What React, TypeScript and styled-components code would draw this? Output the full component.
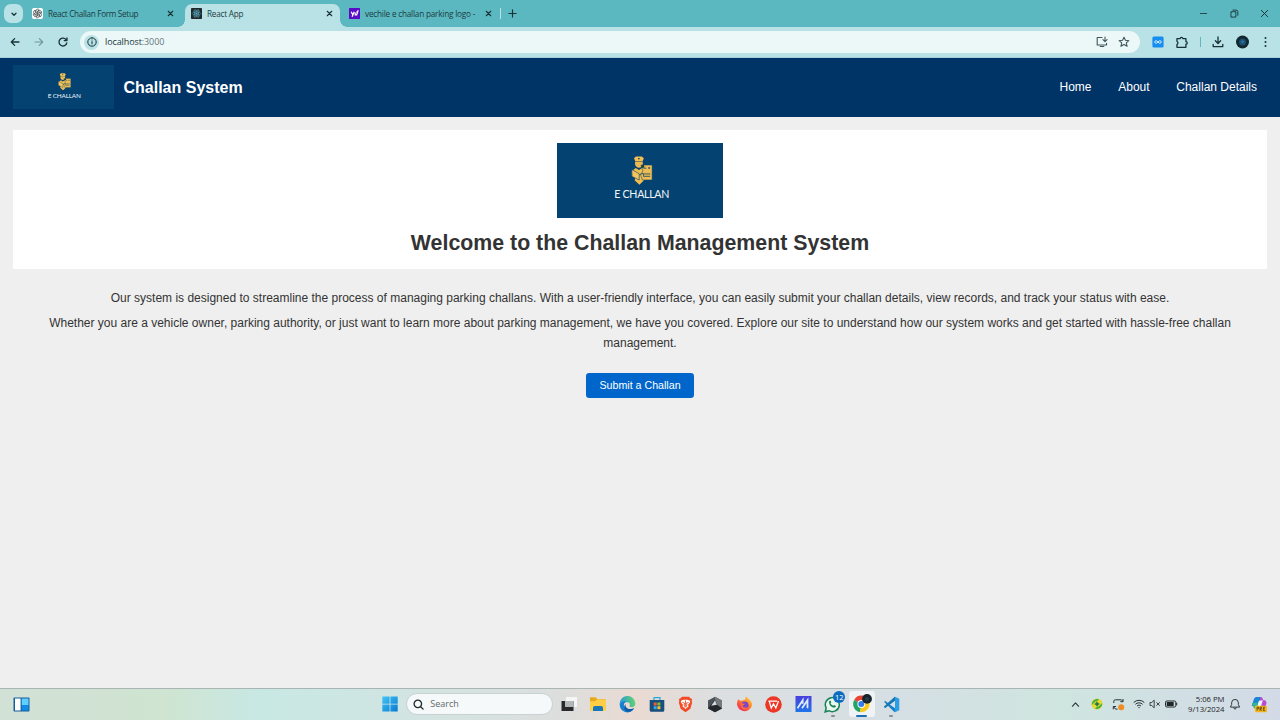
import React from "react";
import styled, { createGlobalStyle } from "styled-components";

const GlobalStyle = createGlobalStyle`
  *, *::before, *::after { box-sizing: border-box; }
  body { margin: 0; background: #efefef; overflow: hidden; }
  h1, h2, p { margin: 0; }
  svg { display: block; flex: none; }
`;

const ui = `"Open Sans", "Noto Sans", sans-serif`;
const sans = `"Liberation Sans", Arial, sans-serif`;

const Screen = styled.div`
  width: 1280px;
  height: 720px;
  display: flex;
  flex-direction: column;
  overflow: hidden;
  font-family: ${sans};
  color: #333;
`;

/* Browser chrome */
const TabStrip = styled.div`
  height: 27px;
  background: #5bb8c0;
  display: flex;
  align-items: stretch;
  padding-left: 4px;
  flex: none;
`;
const TabMenu = styled.div`
  width: 19px;
  height: 19px;
  margin-top: 4px;
  border-radius: 7px;
  background: #b8e2e5;
  display: grid;
  place-items: center;
`;
const Tab = styled.div<{ $active?: boolean; $width: number; $end?: number }>`
  position: relative;
  width: ${(p) => p.$width}px;
  height: ${(p) => (p.$active ? 23 : 27)}px;
  margin-top: ${(p) => (p.$active ? 4 : 0)}px;
  padding: ${(p) => (p.$active ? "0 7px 4px 6px" : `0 ${p.$end ?? 11}px 0 9px`)};
  border-radius: 7px 7px 0 0;
  background: ${(p) => (p.$active ? "#b8e2e5" : "transparent")};
  display: flex;
  align-items: center;
  ${(p) =>
    p.$active &&
    `
    &::before, &::after {
      content: "";
      position: absolute;
      bottom: 0;
      width: 7px;
      height: 7px;
    }
    &::before { left: -7px; background: radial-gradient(circle at 0 0, transparent 6.5px, #b8e2e5 7px); }
    &::after { right: -7px; background: radial-gradient(circle at 100% 0, transparent 6.5px, #b8e2e5 7px); }
  `}
`;
const TabTitle = styled.span<{ $spacing?: number }>`
  flex: 1;
  margin-left: 5px;
  font: 400 8.2px/12px ${ui};
  letter-spacing: ${(p) => p.$spacing ?? 0}px;
  color: #1d3c40;
  white-space: nowrap;
`;
const TabDivider = styled.i`
  width: 1px;
  height: 11px;
  margin: 8px 7px 0 2px;
  background: #b8e2e5;
`;
const NewTab = styled.div`
  margin-top: 9px;
`;
const WindowButtons = styled.div`
  margin-left: auto;
  width: 81px;
  padding: 9px 11px 0 0;
  display: flex;
  justify-content: space-between;
`;
const AddressRow = styled.div`
  height: 31px;
  flex: none;
  background: #b8e2e5;
  box-shadow: inset 0 -1px #a6d0d5;
  display: flex;
  align-items: center;
  padding: 0 9px 1px 9px;
`;
const NavButtons = styled.div`
  display: flex;
  gap: 12px;
  width: 71px;
`;
const Omnibox = styled.div`
  width: 1060px;
  height: 22px;
  border-radius: 11px;
  background: #ecf7f8;
  display: flex;
  align-items: center;
  padding: 0 10px 0 4px;
`;
const SiteInfo = styled.div`
  width: 15px;
  height: 15px;
  border-radius: 50%;
  background: #b8e2e5;
  display: grid;
  place-items: center;
`;
const Url = styled.span`
  flex: 1;
  margin-left: 6px;
  font: 400 9px/14px ${ui};
  letter-spacing: -0.1px;
  color: #22383b;
  span { color: #66797c; }
`;
const OmniActions = styled.div`
  display: flex;
  gap: 10px;
`;
const Extensions = styled.div`
  flex: 1;
  margin: 0 1px 0 11.5px;
  display: flex;
  align-items: center;
  justify-content: space-between;
`;
const ToolDivider = styled.i`
  width: 1px;
  height: 10px;
  background: #5bb8c0;
`;

/* Web page */
const Page = styled.div`
  flex: 1;
  background: #efefef;
`;
const Header = styled.header`
  height: 59px;
  background: #003366;
  display: flex;
  align-items: center;
  padding: 0 23px 1px 13px;
  color: #fff;
`;
const Brand = styled.h1`
  margin: 1px 0 0 10px;
  font-size: 16px;
  line-height: 20px;
  font-weight: 700;
`;
const Menu = styled.nav`
  margin-left: auto;
  display: flex;
  gap: 26.7px;
  font-size: 12px;
  line-height: 16px;
`;
const MenuLink = styled.a`
  color: #fff;
`;
const LogoBox = styled.div<{ $w: number; $h: number }>`
  width: ${(p) => p.$w}px;
  height: ${(p) => p.$h}px;
  background: #044271;
  display: flex;
  flex-direction: column;
  align-items: center;
  padding-top: ${(p) => p.$w * 0.078}px;
  padding-left: ${(p) => p.$w * 0.02}px;
`;
const LogoText = styled.span<{ $size: number }>`
  margin-top: ${(p) => p.$size * 0.26}px;
  font: 400 ${(p) => p.$size}px/1.2 Lato, ${sans};
  letter-spacing: -0.03em;
  color: #f3f7fa;
  white-space: nowrap;
`;
const Hero = styled.section`
  margin: 13px 13px 0;
  height: 139px;
  background: #fff;
  display: flex;
  flex-direction: column;
  align-items: center;
  padding-top: 13.4px;
`;
const HeroTitle = styled.h2`
  margin-top: 12px;
  font-size: 21.333px;
  line-height: 26px;
  font-weight: 700;
`;
const Copy = styled.main`
  padding: 20px 27px 0;
  display: flex;
  flex-direction: column;
  align-items: center;
  text-align: center;
`;
const Paragraph = styled.p`
  margin-bottom: 6.2px;
  font-size: 12px;
  line-height: 19.2px;
`;
const SubmitButton = styled.button`
  margin-top: 13.9px;
  width: 108px;
  height: 25px;
  border: 0;
  border-radius: 3.3px;
  padding: 0;
  background: #0066cc;
  color: #fff;
  font: 400 10.667px/25px ${sans};
`;

/* Taskbar */
const Taskbar = styled.footer`
  height: 32px;
  flex: none;
  border-top: 1px solid #a8b5b3;
  background: linear-gradient(90deg, #d2e1d6 0, #cfe4d1 165px, #c8e8e4 260px, #cde6e3 350px, #d7e2e0 480px, #dcdedd 560px, #eadad2 635px, #dcdfe1 720px, #d5dfe4 900px, #cfe5df 1060px, #d0e2e2 1120px, #d3dae7 1280px);
  display: flex;
  align-items: center;
  padding-bottom: 1px;
`;
const Widgets = styled.div`
  width: 375.5px;
  padding-left: 13px;
`;
const Apps = styled.div`
  display: flex;
  align-items: center;
`;
const AppSlot = styled.div<{ $active?: boolean; $running?: boolean }>`
  position: relative;
  width: 29.35px;
  height: 26px;
  display: grid;
  place-items: center;
  &::before {
    content: "";
    position: absolute;
    inset: 0 2px;
    border-radius: 3px;
    background: ${(p) => (p.$active ? "#eff3f5" : "transparent")};
  }
  &::after {
    content: "";
    position: absolute;
    bottom: 0;
    width: ${(p) => (p.$active ? 11 : 4)}px;
    height: 2px;
    border-radius: 1px;
    background: ${(p) => (p.$active ? "#1b6fb5" : p.$running ? "#868c90" : "transparent")};
  }
  svg { position: relative; }
`;
const Badge = styled.span`
  position: absolute;
  top: 0;
  right: 2px;
  width: 12px;
  height: 12px;
  border-radius: 50%;
  background: #0b6cbf;
  color: #fff;
  font: 400 7.5px/12px ${ui};
  text-align: center;
`;
const Search = styled.div`
  width: 147px;
  height: 22px;
  margin: 0 1px 0 1px;
  border: 1px solid #c8d2d3;
  border-radius: 11px;
  background: #f5f9f9;
  display: flex;
  align-items: center;
  padding-left: 6px;
  gap: 6.5px;
  font: 400 9px/14px ${ui};
  color: #62696b;
`;
const Tray = styled.div`
  margin-left: auto;
  display: flex;
  align-items: center;
  padding-right: 7px;
`;
const TrayItem = styled.div<{ $w: number }>`
  width: ${(p) => p.$w}px;
  display: grid;
  place-items: center;
`;
const Clock = styled.div`
  width: 44px;
  padding-right: 0.5px;
  text-align: right;
  font: 400 7.7px/10.4px ${ui};
  color: #1e2426;
  white-space: nowrap;
`;

const Emblem = ({ width }: { width: number }) => (
  <svg width={width} height={width * 1.34} viewBox="0 0 22 29.5">
    <path d="M3 2.2 5 .6h6l2 1.6-1.2 2.9H4.2z" fill="#f3bf50" />
    <path d="M7 2.6 8 1.7l1 .9L8 3.7z" fill="#044271" />
    <path d="M4.1 5.5h7.8v2.6C11.9 10 10 11.9 8 11.9S4.1 10 4.1 8.1z" fill="#eeb953" />
    <path d="m.8 15.2 4-3.2 3.3 2.2 3-2.1 3 5.7-1.2 7L8.5 29l-4.7-4.2.3-3.7-3.3-1z" fill="#f0bd4e" />
    <path d="M.8 13.6 8.3 18v6.2l-7.2-3.5z" fill="#f6c55c" stroke="#044271" strokeWidth=".6" />
    <path d="M10 9.2h11.3v15H11.5l-1.8-5.5 2.4-3.5z" fill="#edbd54" stroke="#044271" strokeWidth=".5" />
    <path d="M12.5 12.3h3M12.5 18.1h7M13.4 20.5h6" stroke="#3a5860" strokeWidth="1" />
    <path d="m10.4 9.2 2.5-.2.8 2.7-3.2.3z" fill="#173e39" />
    <circle cx="18.3" cy="12.1" r="1" fill="#3a5860" />
    <path d="M8.5 19 12 17.2l1.2 4.2" stroke="#044271" strokeWidth=".8" fill="none" />
  </svg>
);

const Logo = ({ w, h }: { w: number; h: number }) => (
  <LogoBox $w={w} $h={h}>
    <Emblem width={w * 0.131} />
    <LogoText $size={w * 0.064}>E CHALLAN</LogoText>
  </LogoBox>
);

type LineProps = { d: string; size?: number; w?: number; color?: string };
const Line = ({ d, size = 10, w = 1, color = "#173336" }: LineProps) => (
  <svg width={size} height={size} viewBox="0 0 10 10" fill="none" stroke={color} strokeWidth={w} strokeLinecap="round" strokeLinejoin="round">
    <path d={d} />
  </svg>
);
const CloseIcon = () => <Line size={7} w={1.6} d="M1.8 1.8 8.2 8.2M8.2 1.8 1.8 8.2" />;

const GptIcon = () => (
  <svg width="11" height="11" viewBox="0 0 22 22">
    <rect width="22" height="22" rx="4" fill="#fff" />
    <g fill="none" stroke="#333c3e" strokeWidth="1.4">
      {[0, 60, 120, 180, 240, 300].map((a) => (
        <path key={a} transform={`rotate(${a} 11 11)`} d="M8 9.3V5.5a3.5 3.5 0 0 1 6.5-1.5l-3.6 2.2v4.5" />
      ))}
    </g>
  </svg>
);
const ReactIcon = () => (
  <svg width="11" height="11" viewBox="0 0 22 22">
    <rect width="22" height="22" rx="1.5" fill="#20272d" />
    <g fill="none" stroke="#5bb9cf" strokeWidth="1.1">
      {[0, 60, 120].map((a) => (
        <ellipse key={a} cx="11" cy="11" rx="8.5" ry="3.3" transform={`rotate(${a} 11 11)`} />
      ))}
    </g>
    <circle cx="11" cy="11" r="1.8" fill="#5bb9cf" />
  </svg>
);
const YahooIcon = () => (
  <svg width="11" height="11" viewBox="0 0 11 11">
    <rect width="11" height="11" rx=".5" fill="#5b0ac8" />
    <path d="m2.2 3.8 1.5 3M5.2 3.8 3.1 8.7M6.2 4.6v2.2h1.5l1.5-4.5M7.3 4.2H9" fill="none" stroke="#fff" strokeWidth="1.2" />
  </svg>
);

const WidgetIcon = () => (
  <svg width="17" height="15" viewBox="0 0 17 15">
    <rect x=".5" y=".5" width="16" height="14" rx="1" fill="#145e9e" />
    <path d="M2 1.5h5.6v12H2z" fill="#fff" />
    <path d="M8.7 1.5H15.5v6.7H8.7z" fill="#5ed0ff" />
    <path d="M8.7 8.2H15.5v5.3H8.7z" fill="#128be7" />
  </svg>
);
const StartIcon = () => (
  <svg width="16" height="16" viewBox="0 0 16 16">
    <defs>
      <linearGradient id="start" x1="0" y1="0" x2="1" y2="1">
        <stop stopColor="#42c5f5" />
        <stop offset="1" stopColor="#0878d1" />
      </linearGradient>
    </defs>
    <path d="M.3.5h7.3v7.2H.3zM8.4.5h7.3v7.2H8.4zM.3 8.4h7.3v7.2H.3zM8.4 8.4h7.3v7.2H8.4z" fill="url(#start)" />
  </svg>
);
const TaskViewIcon = () => (
  <svg width="16" height="16" viewBox="0 0 16 16">
    <path d="M5 1h11v10H5z" fill="#f4f5f5" />
    <path d="M.5 5h12v10H.5z" fill="#272a2b" />
    <path d="M4 5h8.5v6H4z" fill="#b4b7b8" />
  </svg>
);
const FolderIcon = () => (
  <svg width="18" height="16" viewBox="0 0 18 16">
    <path d="M1 1.2h5.5l2 2H16a1 1 0 0 1 1 1V14H1z" fill="#e5a91e" />
    <path d="M1 5.2h5l2-1.6h9v11.2H1z" fill="#ffce45" />
    <path d="M4 15v-3a2 2 0 0 1 2-2h6a2 2 0 0 1 2 2v3z" fill="#1a78b9" />
  </svg>
);
const EdgeIcon = () => (
  <svg width="17" height="17" viewBox="0 0 24 24">
    <defs>
      <linearGradient id="edge" x1="0" y1=".4" x2="1" y2=".3">
        <stop stopColor="#249cde" />
        <stop offset="1" stopColor="#65d46a" />
      </linearGradient>
    </defs>
    <path d="M1 12A11 11 0 0 1 23 10c.4 3.7-2 5.5-5 5.5-3.5 0-3.7-1.4-2.8-2.8 1-1.8-.7-4-4-4-4.8 0-8.2 3-10.2 3.3z" fill="url(#edge)" />
    <path d="M1 12C3 7.5 7.4 7 10.5 7.7 7 9 6 12.5 7.7 16c1.8 3.8 6.5 5.3 12.2 3.7A11 11 0 0 1 1 12z" fill="#167fce" />
    <path d="M9.2 11.2C8.3 17.6 15 20 21.5 17c-2.8 6-9.6 6.5-12.5 3.3-2.2-2.5-2.5-6.8.2-9.1z" fill="#0d5ca9" />
  </svg>
);
const StoreIcon = () => (
  <svg width="16" height="17" viewBox="0 0 16 17">
    <path d="M5 4V1.7h6V4" fill="none" stroke="#26a8dd" strokeWidth="1.2" />
    <path d="M.7 4h14.6v10.3a1.5 1.5 0 0 1-1.5 1.5H2.2a1.5 1.5 0 0 1-1.5-1.5z" fill="#174e7d" />
    <path d="M4.7 6.5h3v3h-3z" fill="#f25b35" />
    <path d="M8.4 6.5h3v3h-3z" fill="#82bd35" />
    <path d="M4.7 10.2h3v3h-3z" fill="#36a9e9" />
    <path d="M8.4 10.2h3v3h-3z" fill="#f8bd32" />
  </svg>
);
const BraveIcon = () => (
  <svg width="15" height="17" viewBox="0 0 20 23">
    <path d="M5.3 1h9.4L17 3.5l2 .7-.7 2.5.7 2.1-2.4 8.4L10 22l-6.6-4.8L1 8.8l.7-2.1L1 4.2l2-.7z" fill="#f14a24" />
    <path d="m4.3 6 3.1-.9h5.2l3.1.9.8 2.2-3.2 4.1 1 1.7L10 17.5 5.7 14l1-1.7-3.2-4.1z" fill="#fff" />
    <path d="m5.7 8.5 3 1.2-.7 3 2 1.1 2-1.1-.7-3 3-1.2M10 6v7M8 14.7h4" fill="none" stroke="#f14a24" strokeWidth="1.2" />
  </svg>
);
const CubeIcon = () => (
  <svg width="16" height="17" viewBox="0 0 16 17">
    <path d="m8 .7 7 3.8v8L8 16.3 1 12.5v-8z" fill="#4c5358" />
    <path d="m8 .7 7 3.8v8L8 9z" fill="#737a7d" />
    <path d="m1 12.5 7-9 2.2 5.3L15 12.5l-7 3.8z" fill="#25292d" />
    <path d="M8 4.2 4.2 9.7l5.7-1z" fill="#d6dadb" />
  </svg>
);
const FirefoxIcon = () => (
  <svg width="17" height="17" viewBox="0 0 24 24">
    <defs>
      <linearGradient id="fox" x1="1" y1="0" x2=".2" y2="1">
        <stop stopColor="#ffe347" />
        <stop offset=".45" stopColor="#ff8a2b" />
        <stop offset="1" stopColor="#f0245c" />
      </linearGradient>
    </defs>
    <path d="M3.3 4.5 6.5 7c1-.5 2-.6 3-.4C10.5 5.5 12 5 13 5.3 12.7 3.4 13.6 1.7 15 .8c1 3.2 7.8 5 7.8 12A10.8 10.8 0 1 1 3.3 4.5z" fill="url(#fox)" />
    <circle cx="12.5" cy="13" r="5.2" fill="#8244c5" />
    <path d="M6.7 10.5c2.2-1.2 4 .8 6 .2-.3 2-3 2-3.5 3.8 1.4 2.5 5 2.8 7.5.5-1 4-6.8 5-9 1.4z" fill="#ff7139" />
  </svg>
);
const WpsIcon = () => (
  <svg width="17" height="17" viewBox="0 0 16 16">
    <circle cx="8" cy="8" r="7.8" fill="#ec3626" />
    <path d="M3.2 4.9h8.2M4 5l1.9 6.3 2.1-4 2.2 4L12.7 4.8" fill="none" stroke="#fff" strokeWidth="1.2" />
  </svg>
);
const MeterIcon = () => (
  <svg width="17" height="16" viewBox="0 0 17 16">
    <defs>
      <linearGradient id="meter" x1="0" y1="0" x2="0" y2="1">
        <stop stopColor="#4a3fdc" />
        <stop offset="1" stopColor="#1f74e8" />
      </linearGradient>
    </defs>
    <path d="M.5 0h16v16H.5z" fill="url(#meter)" />
    <path d="m2.5 12.2 5.2-8v3.6M7 12.2l5.5-8v8" fill="none" stroke="#dcebff" strokeWidth="1.8" />
  </svg>
);
const WhatsAppIcon = () => (
  <svg width="17" height="17" viewBox="0 0 17 17">
    <path d="m1.2 15.8 1-3.8a7 7 0 1 1 2.7 2.7z" fill="#e9f6ed" stroke="#168255" strokeWidth="1.5" />
    <path d="M5.2 5.2c1.3-1.6 1.7.2 2 1.2l-.7.8c.6 1.2 1.4 2 2.7 2.6l.8-.9 2 1c-.3 1.8-2 2-3.6 1.3-1.9-.9-3.8-3.3-3.2-6z" fill="#168255" />
  </svg>
);
const ChromeIcon = () => (
  <svg width="20" height="20" viewBox="0 0 20 20">
    <path d="M9.3 10 2.2 6A8 8 0 0 1 16.5 6z" fill="#e84435" />
    <path d="M9.3 10 2.2 6a8.2 8.2 0 0 0 6 12.1z" fill="#21a464" />
    <path d="M9.3 10 16.5 6a8.2 8.2 0 0 1-8.3 12.1z" fill="#fbc917" />
    <circle cx="9.3" cy="10" r="3.9" fill="#fff" />
    <circle cx="9.3" cy="10" r="3" fill="#347de8" />
    <circle cx="15" cy="4.9" r="4.9" fill="#17222a" />
    <circle cx="15" cy="4.9" r="2" fill="#203d50" />
  </svg>
);
const CodeIcon = () => (
  <svg width="17" height="17" viewBox="0 0 17 17">
    <path d="m12 .7 4.3 2v11.6l-4.3 2z" fill="#2c9fe4" />
    <path d="M12 .7 5 7 2.3 5 1 5.8l9.8 9.8 1.2.7v-4.1L6.7 8.4 12 4.5z" fill="#1580c5" />
    <path d="m1 11.3 1.3.8L12 4.5V.7L1 10.5z" fill="#1977b5" />
  </svg>
);
const TrayGreenIcon = () => (
  <svg width="12" height="12" viewBox="0 0 12 12">
    <circle cx="6" cy="6" r="5.5" fill="#e2d82f" />
    <path d="M.8 7C.6 3 4 .2 8 1.1L6.2 3C4 3.2 3 4.7.8 7zM11.2 5c.2 4-3.2 6.8-7.2 5.9L5.8 9C8 8.8 9 7.3 11.2 5z" fill="#48ad42" />
    <path d="M6 3.7v4.6M3.7 6h4.6" stroke="#187341" strokeWidth="1.4" />
  </svg>
);
const SyncIcon = () => (
  <svg width="13" height="13" viewBox="0 0 13 13">
    <path d="M1.8 5V3.3a1.5 1.5 0 0 1 1.5-1.5h6L11 3.5M11 1v2.7H8.3M1.3 11.3V8.5H4M1.5 8.6l2 2.5h2" fill="none" stroke="#293234" />
    <circle cx="9.2" cy="9.2" r="3" fill="#f08c24" />
  </svg>
);
const WifiIcon = () => (
  <svg width="12" height="10" viewBox="0 0 12 10" fill="none" stroke="#293234">
    <path d="M.7 3.5a7.5 7.5 0 0 1 10.6 0M2.4 5.3a5.1 5.1 0 0 1 7.2 0M4 7a2.8 2.8 0 0 1 4 0" />
    <circle cx="6" cy="8.6" r=".7" fill="#293234" stroke="none" />
  </svg>
);
const MuteIcon = () => (
  <svg width="12" height="10" viewBox="0 0 12 10" fill="none" stroke="#293234" strokeWidth=".9">
    <path d="M1 3.5h1.7l2.5-2.3v7.6L2.7 6.5H1zM7.4 3.3l3.3 3.4M10.7 3.3 7.4 6.7" />
  </svg>
);
const BatteryIcon = () => (
  <svg width="13" height="8" viewBox="0 0 13 8">
    <rect x=".5" y="1" width="10.3" height="6" rx="1.3" fill="none" stroke="#202729" />
    <path d="M1.7 2.1h7v3.8h-7zM11.2 2.8h1v2.4h-1z" fill="#202729" />
  </svg>
);
const CopilotIcon = () => (
  <svg width="16" height="17" viewBox="0 0 16 17">
    <path d="M4.7 1h5l1.2 3-3 1.2-1.4 4.7H.7L3 2.7z" fill="#1987d4" />
    <path d="M9 1.2h2l1.3 3.1h1.9l1.4 2.2-1.6 6.3H9z" fill="#b64bd4" />
    <path d="m1 7 5.7-.3-1.4 5.8H3z" fill="#35b68d" />
    <path d="m8 4.8 3.8-.6-1.9 6.6H6.2z" fill="#eff5fa" />
    <rect x="4" y="9.7" width="12" height="6.5" rx="1" fill="#f6b71b" />
    <path d="M6 14.7v-3.6h1.5v1.7H6M9 14.8v-3.7h1.5v1.7H9l1.7 2M14.2 11.2h-1.8v3.5h1.8M12.5 12.9H14" fill="none" stroke="#594113" strokeWidth=".8" />
  </svg>
);

const Browser = () => (
  <>
    <TabStrip>
      <TabMenu><Line size={8} w={1.6} d="M2.5 4 5 6.5 7.5 4" /></TabMenu>
      <Tab $width={162}>
        <GptIcon />
        <TabTitle $spacing={-0.32}>React Challan Form Setup</TabTitle>
        <CloseIcon />
      </Tab>
      <Tab $active $width={155}>
        <ReactIcon />
        <TabTitle $spacing={-0.22}>React App</TabTitle>
        <CloseIcon />
      </Tab>
      <Tab $width={158} $end={6.5}>
        <YahooIcon />
        <TabTitle $spacing={-0.2}>vechile e challan parking logo -</TabTitle>
        <CloseIcon />
      </Tab>
      <TabDivider />
      <NewTab><Line size={9} w={1.3} d="M5 1v8M1 5h8" /></NewTab>
      <WindowButtons>
        <Line size={9} w={0.9} d="M1.5 5h7" />
        <Line size={9} w={1} d="M1.5 3h5v6h-5zM3.2 1.2h3.5Q8.7 1.2 8.7 3v4" />
        <Line size={9} w={1.1} d="M1.5 1.5 8.5 8.5M8.5 1.5 1.5 8.5" />
      </WindowButtons>
    </TabStrip>
    <AddressRow>
      <NavButtons>
        <Line size={12} w={1.1} d="M8.3 5H1.9M4.7 2.2 1.9 5l2.8 2.8" />
        <Line size={12} w={1} color="#6d9a9e" d="M1.7 5h6.4M5.3 2.2 8.1 5 5.3 7.8" />
        <Line size={12} w={1.1} d="M7.8 3.3A3.3 3.3 0 1 0 8.2 5.8M8.3 1.6v2.2H6" />
      </NavButtons>
      <Omnibox>
        <SiteInfo><Line size={10} w={1} d="M5 .8a4.2 4.2 0 1 0 0 8.4a4.2 4.2 0 1 0 0-8.4M5 4.6v2.3M5 3v.1" /></SiteInfo>
        <Url>localhost<span>:3000</span></Url>
        <OmniActions>
          <Line size={12} w={0.9} color="#3d5659" d="M5 1.2H1V7.5h7.8V6M3.5 8.7h3M7.5.8v3.8M5.8 3l1.7 1.7L9.2 3" />
          <Line size={12} w={0.9} color="#3d5659" d="m5 1 1.2 2.6 2.9.3-2.2 1.9.7 2.8L5 7.1 2.4 8.6l.7-2.8L.9 3.9l2.9-.3z" />
        </OmniActions>
      </Omnibox>
      <Extensions>
        <svg width="12" height="12" viewBox="0 0 12 12">
          <rect x=".4" y=".4" width="11.2" height="11.2" rx="1.5" fill="#168df0" />
          <path d="M6 6 5 5.1a1.3 1.3 0 1 0 0 1.8L7 5.1a1.3 1.3 0 1 1 0 1.8z" fill="none" stroke="#e7f7ff" strokeWidth=".9" />
        </svg>
        <Line size={13} w={1} d="M1.5 2h2.5a1 1 0 0 1 2 0h2.4v2.3a1 1 0 0 1 0 2v2.4H1.5V6.6Q3 5.3 1.5 4.1z" />
        <ToolDivider />
        <Line size={12} w={1.1} d="M5 .8v5.3M2.8 4 5 6.2 7.2 4M1 7v1.8h8V7" />
        <svg width="14" height="14" viewBox="0 0 14 14">
          <circle cx="6.5" cy="7" r="6.5" fill="#14272f" />
          <circle cx="6.5" cy="7" r="3.5" fill="#185173" />
          <circle cx="6.5" cy="6.7" r="1.3" fill="#2879a0" />
        </svg>
        <svg width="9" height="12" viewBox="0 0 9 12" fill="#173336">
          <circle cx="4.5" cy="2" r="1" /><circle cx="4.5" cy="6" r="1" /><circle cx="4.5" cy="10" r="1" />
        </svg>
      </Extensions>
    </AddressRow>
  </>
);

const pinnedApps = [TaskViewIcon, FolderIcon, EdgeIcon, StoreIcon, BraveIcon, CubeIcon, FirefoxIcon, WpsIcon, MeterIcon];

export default function App() {
  return (
    <Screen>
      <GlobalStyle />
      <Browser />
      <Page>
        <Header>
          <Logo w={100.5} h={44} />
          <Brand>Challan System</Brand>
          <Menu>
            <MenuLink>Home</MenuLink>
            <MenuLink>About</MenuLink>
            <MenuLink>Challan Details</MenuLink>
          </Menu>
        </Header>
        <Hero>
          <Logo w={166.5} h={74.5} />
          <HeroTitle>Welcome to the Challan Management System</HeroTitle>
        </Hero>
        <Copy>
          <Paragraph>
            Our system is designed to streamline the process of managing parking challans. With a user-friendly interface, you can easily submit your challan details, view records, and track your status with ease.
          </Paragraph>
          <Paragraph>
            Whether you are a vehicle owner, parking authority, or just want to learn more about parking management, we have you covered. Explore our site to understand how our system works and get started with hassle-free challan management.
          </Paragraph>
          <SubmitButton>Submit a Challan</SubmitButton>
        </Copy>
      </Page>
      <Taskbar>
        <Widgets><WidgetIcon /></Widgets>
        <Apps>
          <AppSlot><StartIcon /></AppSlot>
          <Search>
            <Line size={11} w={1.2} color="#20282a" d="M4.4 1a3.4 3.4 0 1 0 0 6.8a3.4 3.4 0 1 0 0-6.8M7 7l2.2 2.2" />
            Search
          </Search>
          {pinnedApps.map((Icon, i) => (
            <AppSlot key={i}><Icon /></AppSlot>
          ))}
          <AppSlot $running><WhatsAppIcon /><Badge>12</Badge></AppSlot>
          <AppSlot $active><ChromeIcon /></AppSlot>
          <AppSlot $running><CodeIcon /></AppSlot>
        </Apps>
        <Tray>
          <TrayItem $w={21}><Line size={9} w={1.2} color="#293234" d="M1.5 7 5 3.3 8.5 7" /></TrayItem>
          <TrayItem $w={21}><TrayGreenIcon /></TrayItem>
          <TrayItem $w={22}><SyncIcon /></TrayItem>
          <TrayItem $w={20}><WifiIcon /></TrayItem>
          <TrayItem $w={12}><MuteIcon /></TrayItem>
          <TrayItem $w={20}><BatteryIcon /></TrayItem>
          <Clock>5:06 PM<br />9/13/2024</Clock>
          <TrayItem $w={20}>
            <Line size={12} w={0.8} color="#293234" d="M1.3 7.3 2.2 5.5V4a2.8 2.8 0 0 1 5.6 0v1.5l.9 1.8zM4 8.2a1 1 0 0 0 2 0" />
          </TrayItem>
          <TrayItem $w={28}><CopilotIcon /></TrayItem>
        </Tray>
      </Taskbar>
    </Screen>
  );
}
